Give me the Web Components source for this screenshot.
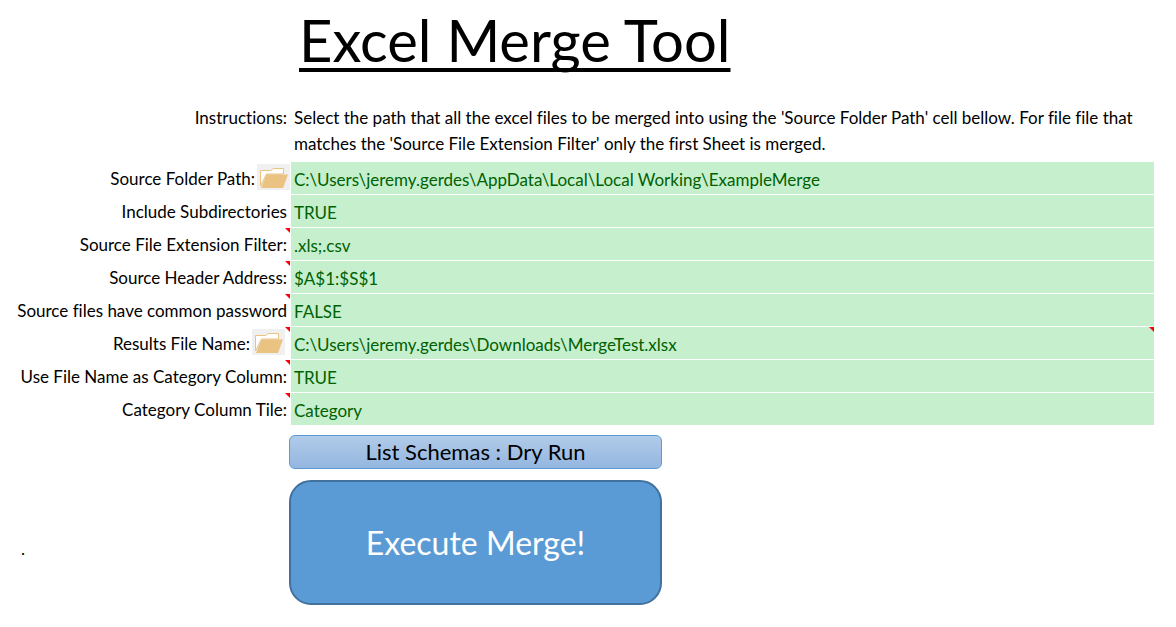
<!DOCTYPE html>
<html lang="en">
<head>
<meta charset="utf-8">
<meta name="viewport" content="width=device-width, initial-scale=1">
<title>Excel Merge Tool</title>
<style>
  body { margin: 0; background: #fff; color: #000; font: 17px/26px Lato, "Liberation Sans", sans-serif; font-variant-ligatures: none; }
</style>
</head>
<body>
<merge-sheet>
  <span slot="title">Excel Merge Tool</span>
  <merge-note label="Instructions:">Select the path that all the excel files to be merged into using the 'Source Folder Path' cell bellow. For file file that matches the 'Source File Extension Filter' only the first Sheet is merged.</merge-note>
  <merge-field label="Source Folder Path:" value="C:\Users\jeremy.gerdes\AppData\Local\Local Working\ExampleMerge" browse></merge-field>
  <merge-field label="Include Subdirectories" value="TRUE"></merge-field>
  <merge-field label="Source File Extension Filter:" value=".xls;.csv" comment></merge-field>
  <merge-field label="Source Header Address:" value="$A$1:$S$1" comment></merge-field>
  <merge-field label="Source files have common password" value="FALSE" comment></merge-field>
  <merge-field label="Results File Name:" value="C:\Users\jeremy.gerdes\Downloads\MergeTest.xlsx" browse comment value-comment></merge-field>
  <merge-field label="Use File Name as Category Column:" value="TRUE" comment></merge-field>
  <merge-field label="Category Column Tile:" value="Category" comment></merge-field>
  <merge-actions slot="actions">
    <span slot="mark">.</span>
    <merge-button>List Schemas : Dry Run</merge-button>
    <merge-button primary>Execute Merge!</merge-button>
  </merge-actions>
</merge-sheet>

<script>
function attach(host, html) {
  const t = document.createElement('template');
  t.innerHTML = html;
  const root = host.attachShadow({ mode: 'open' });
  root.append(t.content.cloneNode(true));
  return root;
}

customElements.define('folder-icon', class extends HTMLElement {
  constructor() {
    super();
    attach(this, `
      <style>:host { display: block; width: 33px; height: 26px; } svg { display: block; }</style>
      <svg width="33" height="26" viewBox="0 0 33 26" aria-hidden="true">
        <path d="M3.5 22V6.5H13.5L16.5 4.5H26.5V10H9.5Z" fill="#fff" stroke="#eac282" stroke-linejoin="round"/>
        <path d="M9.5 10.5H31L26 24H4Z" fill="#eac282"/>
      </svg>`);
  }
});

customElements.define('merge-sheet', class extends HTMLElement {
  constructor() {
    super();
    attach(this, `
      <style>
        :host { display: block; --label: 291px; padding-right: 22px; }
        h1 { margin: 0; padding: 4px 0 29px 299px; font-size: 58px; line-height: 72px; font-weight: 400;
             text-decoration: underline; text-decoration-thickness: 4px; text-underline-offset: 6px; text-decoration-skip-ink: none; }
      </style>
      <h1><slot name="title"></slot></h1>
      <main><slot></slot></main>
      <slot name="actions"></slot>`);
  }
});

customElements.define('merge-note', class extends HTMLElement {
  constructor() {
    super();
    const root = attach(this, `
      <style>
        :host { display: grid; grid-template-columns: var(--label) minmax(0, 1fr); padding-bottom: 5px; }
        b { font-weight: 400; text-align: right; padding-right: 4px; }
        p { margin: 0; padding-left: 3px; }
      </style>
      <b></b><p><slot></slot></p>`);
    root.querySelector('b').textContent = this.getAttribute('label');
  }
});

customElements.define('merge-field', class extends HTMLElement {
  constructor() {
    super();
    const root = attach(this, `
      <style>
        :host { display: grid; grid-template-columns: var(--label) minmax(0, 1fr); height: 32px; margin-bottom: 1px; }
        .name, .cell { position: relative; display: flex; align-items: center; }
        .name { justify-content: flex-end; gap: 2px; padding-right: 4px; white-space: nowrap; }
        :host([browse]) .name { padding-right: 1px; }
        :host([browse][comment]) .name { padding-right: 6px; }
        label { line-height: 30px; padding-top: 2px; }
        button { align-self: flex-start; margin: 2px 0 0; padding: 0; border: 0; background: #f0f0f0; }
        input { box-sizing: border-box; width: 100%; height: 32px; margin: 0; padding: 2px 3px 0; border: 0; border-radius: 0;
                background: #c6efce; color: #006100; font: inherit; font-variant-ligatures: none; outline-offset: -2px; }
        :host([comment]) .name::after, :host([value-comment]) .cell::after {
          content: ""; position: absolute; top: 0; right: 0; width: 5px; height: 5px;
          background: #f00; clip-path: polygon(0 0, 100% 0, 100% 100%); }
        :host([comment]) .name::after { right: 1px; }
      </style>
      <div class="name"><label for="value"></label></div>
      <div class="cell"><input id="value" type="text" spellcheck="false"></div>`);
    root.querySelector('label').textContent = this.getAttribute('label');
    root.querySelector('input').setAttribute('value', this.getAttribute('value'));
    if (this.hasAttribute('browse')) {
      const button = document.createElement('button');
      button.type = 'button';
      button.setAttribute('aria-label', 'Browse');
      button.append(document.createElement('folder-icon'));
      root.querySelector('.name').append(button);
    }
  }
});

customElements.define('merge-actions', class extends HTMLElement {
  constructor() {
    super();
    attach(this, `
      <style>
        :host { display: grid; grid-template-columns: 289px minmax(0, 373px); padding: 9px 0 22px; }
        .mark { align-self: end; padding: 0 0 43px 21px; }
        .stack { display: grid; gap: 11px; }
      </style>
      <div class="mark"><slot name="mark"></slot></div>
      <div class="stack"><slot></slot></div>`);
  }
});

customElements.define('merge-button', class extends HTMLElement {
  constructor() {
    super();
    attach(this, `
      <style>
        :host { display: block; }
        button { display: block; box-sizing: border-box; width: 100%; margin: 0; padding: 0; height: 34px; border: 1px solid #5b9bd5;
                 border-radius: 6px; background: linear-gradient(#b1cbe9, #94b6e0); color: #000;
                 font: inherit; font-size: 22px; line-height: 32px; }
        :host([primary]) button { height: 125px; border: 2px solid #41719c; border-radius: 22px;
                 background: #5b9bd5; color: #fff; font-size: 32px; }
      </style>
      <button type="button"><slot></slot></button>`);
  }
});
</script>
</body>
</html>
